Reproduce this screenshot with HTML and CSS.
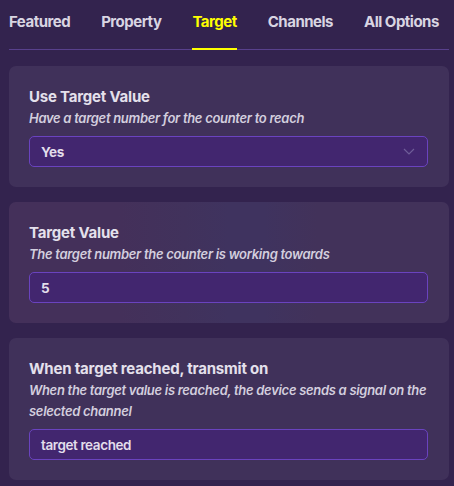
FILE: index.html
```html
<!DOCTYPE html>
<html>
<head>
<meta charset="utf-8">
<link rel="stylesheet" href="styles.css">
</head>
<body>
<div class="page">
  <nav class="tabs">
    <div class="tab">Featured</div>
    <div class="tab">Property</div>
    <div class="tab active">Target</div>
    <div class="tab">Channels</div>
    <div class="tab">All Options</div>
  </nav>
  <div class="cards">
    <section class="card">
      <div class="title">Use Target Value</div>
      <div class="desc">Have a target number for the counter to reach</div>
      <div class="field select">
        <span>Yes</span>
        <svg class="chev" width="12" height="7" viewBox="0 0 12 7"><path d="M1 1 L6 6 L11 1" fill="none" stroke="#6f5d99" stroke-width="1.2"/></svg>
      </div>
    </section>
    <section class="card tinted">
      <div class="title">Target Value</div>
      <div class="desc">The target number the counter is working towards</div>
      <div class="field"><span>5</span></div>
    </section>
    <section class="card">
      <div class="title">When target reached, transmit on</div>
      <div class="desc">When the target value is reached, the device sends a signal on the selected channel</div>
      <div class="field"><span class="light">target reached</span></div>
    </section>
  </div>
</div>
</body>
</html>
```
FILE: styles.css
```css
html, body {
  margin: 0;
  padding: 0;
  background: #33234e;
}
body {
  font-family: Inter, "Noto Sans", sans-serif;
  width: 454px;
  height: 486px;
  overflow: hidden;
}
.page {
  padding: 0 5px 0 9px;
}
.tabs {
  display: flex;
  gap: 31px;
  border-bottom: 1px solid #58408c;
  height: 50px;
  box-sizing: border-box;
}
.tab {
  color: #d9d5e2;
  font-weight: 700;
  font-size: 15px;
  letter-spacing: -0.5px;
  line-height: 20px;
  padding-top: 12px;
  position: relative;
}
.tab.active {
  color: #ffff00;
}
.tab.active::after {
  content: "";
  position: absolute;
  left: 0;
  right: 0;
  bottom: -1px;
  height: 2px;
  background: #ffff00;
}
.cards {
  display: flex;
  flex-direction: column;
  gap: 15px;
  padding-top: 16px;
}
.card {
  background: #40315a;
  border-radius: 7px;
  padding: 20px 21px 20px 20px;
}
.card.tinted {
  background: linear-gradient(90deg, #44305a 0%, #44305a 25%, #41325c 40%, #3f335f 50%, #3f335f 58%, #42325a 70%, #42325a 100%);
}
.title {
  color: #e4e0ec;
  font-weight: 700;
  font-size: 15px;
  letter-spacing: -0.2px;
  line-height: 22px;
}
.desc {
  color: #d3cede;
  font-style: italic;
  font-weight: 600;
  font-size: 13px;
  letter-spacing: -0.3px;
  line-height: 21px;
  margin-bottom: 7px;
}
.field {
  height: 31px;
  box-sizing: border-box;
  border: 1px solid #6a43bf;
  background: #42266f;
  border-radius: 5px;
  display: flex;
  align-items: center;
  justify-content: space-between;
  padding: 0 12px 0 11px;
  color: #e2deeb;
  font-weight: 700;
  font-size: 13.5px;
  letter-spacing: -0.3px;
}
.field .light {
  font-weight: 600;
  letter-spacing: -0.4px;
}
.chev {
  display: block;
}
```
